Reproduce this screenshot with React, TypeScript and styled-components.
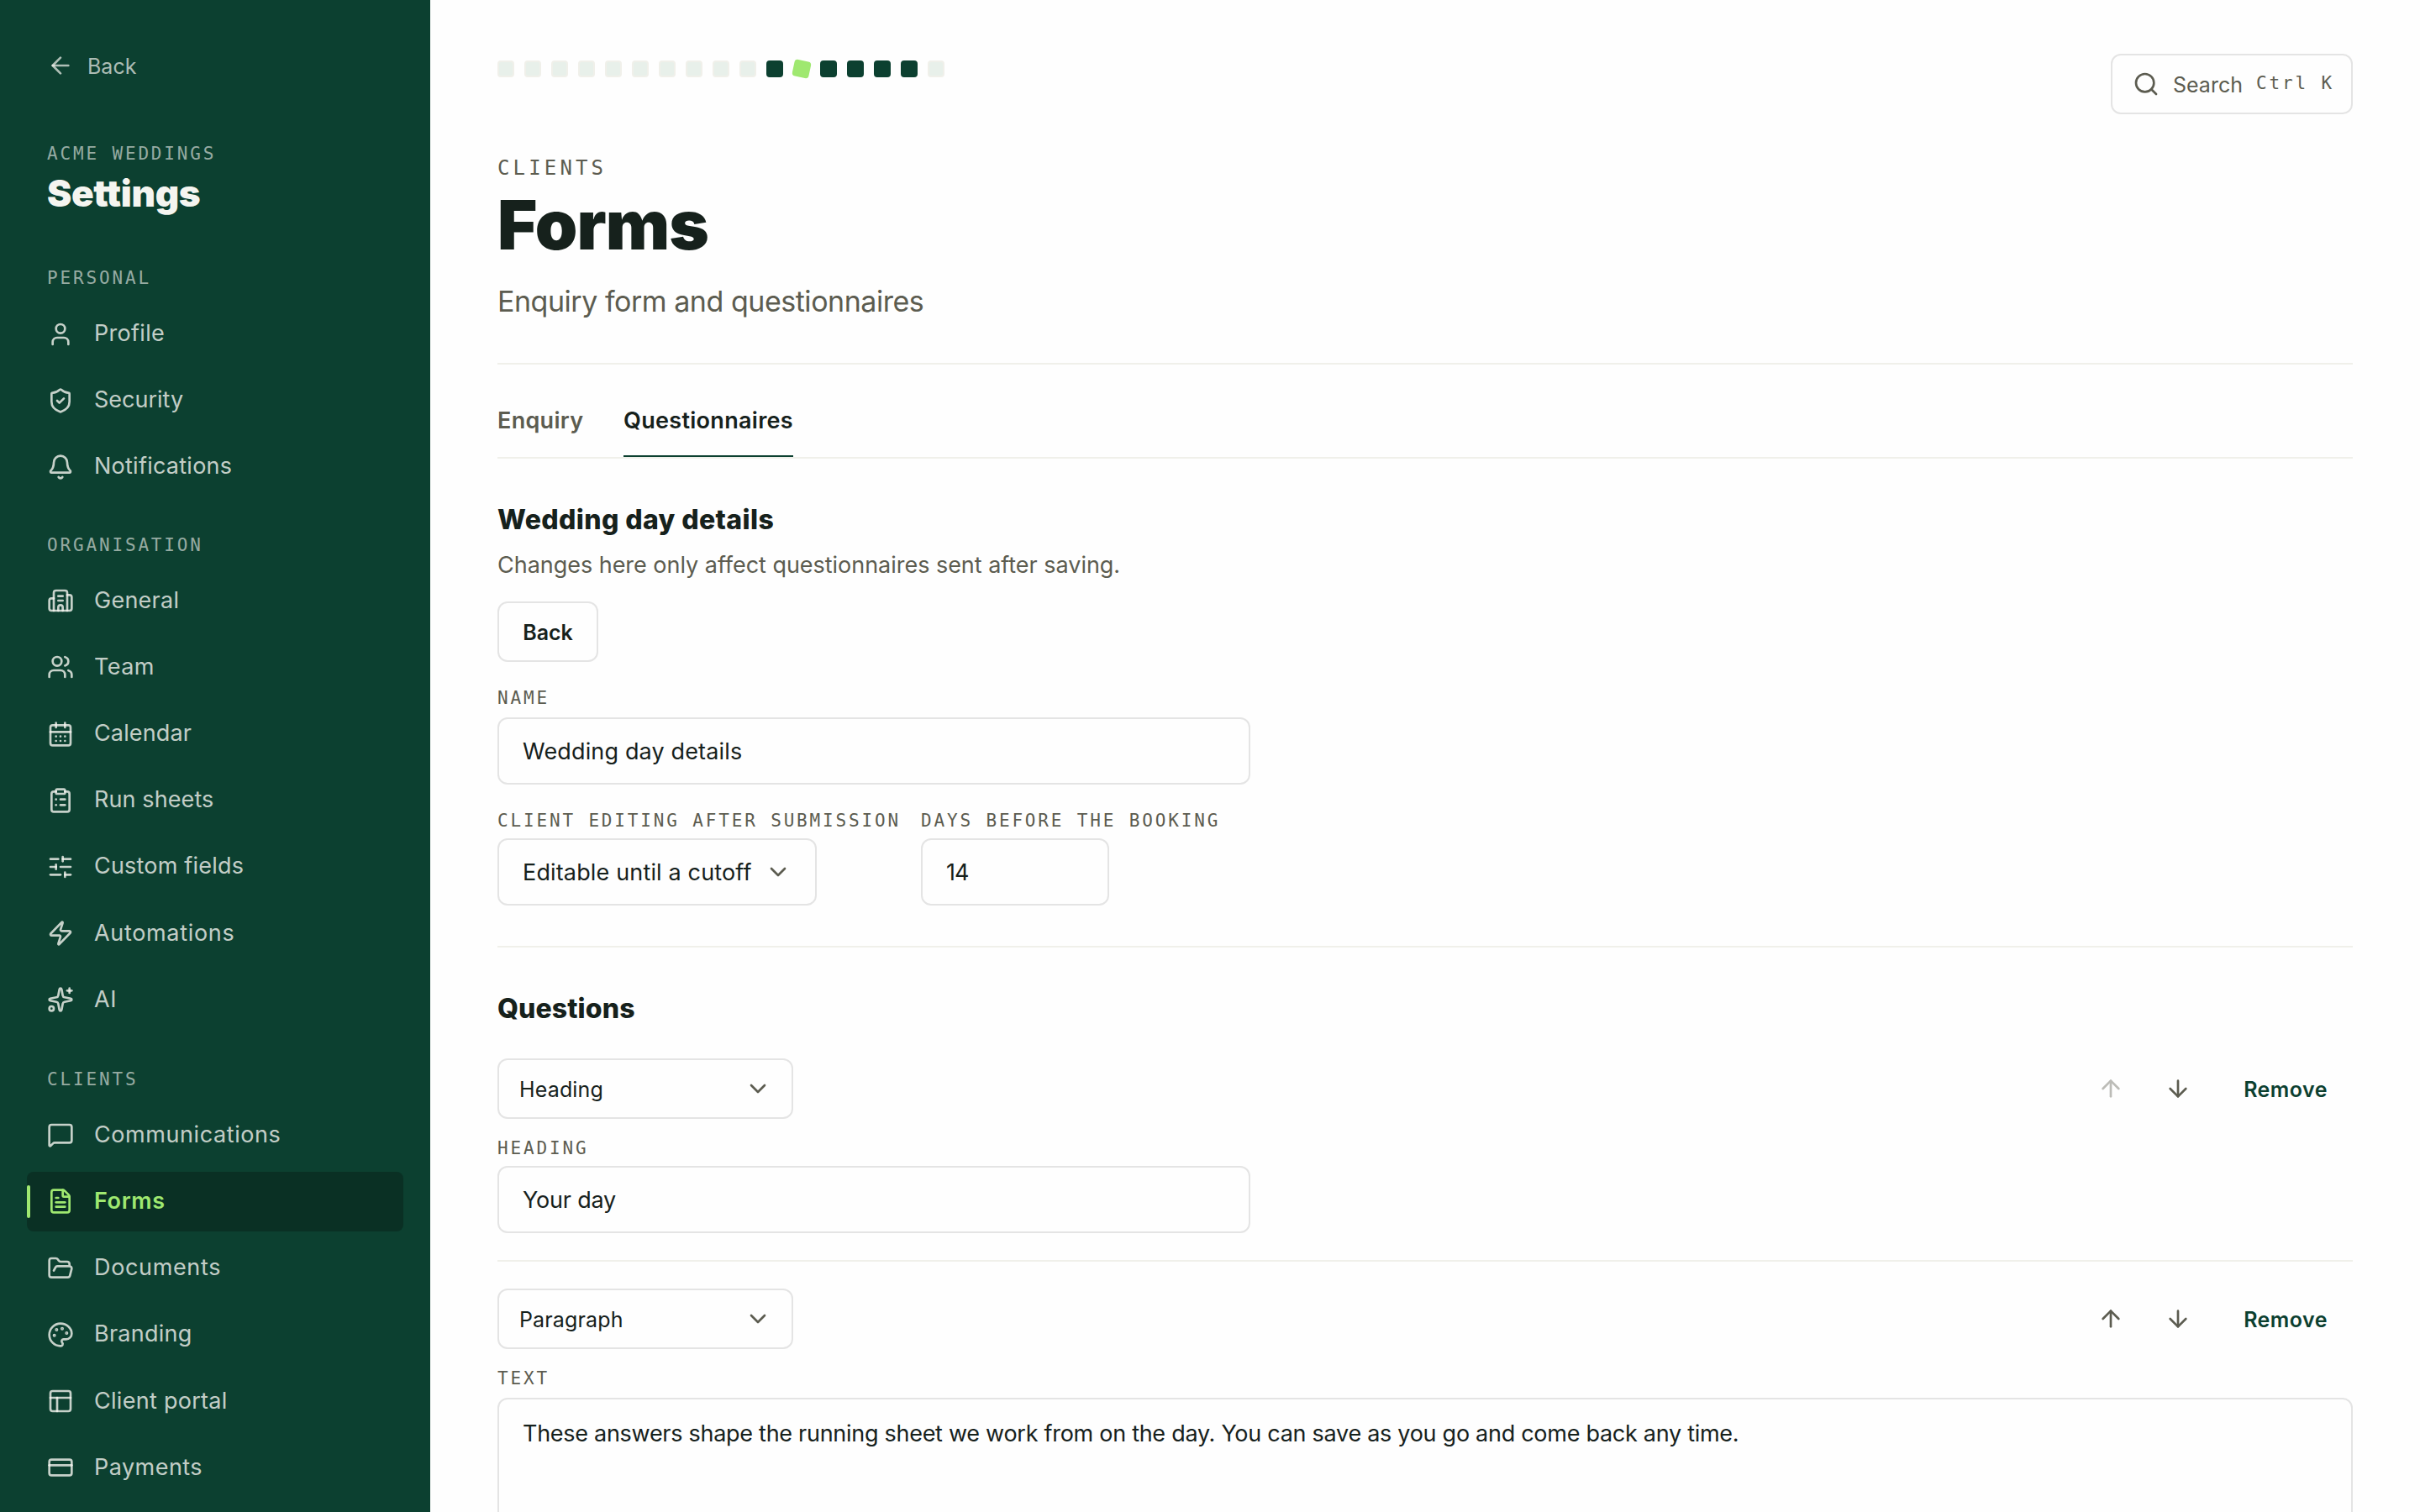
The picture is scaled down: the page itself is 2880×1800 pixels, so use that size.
import React from "react";
import styled, { createGlobalStyle, css } from "styled-components";
import {
  ArrowDown, ArrowLeft, ArrowUp, Bell, Building2, CalendarDays, ChevronDown, ClipboardList, CreditCard,
  FileText, FolderOpen, MessageSquare, Palette, PanelsTopLeft, Search, ShieldCheck, SlidersHorizontal,
  Sparkles, User, Users, Zap,
} from "lucide-react";

const c = {
  forest: "#0c4030",
  forestDeep: "#0a3024",
  lime: "#9fe870",
  ink: "#16211c",
  muted: "#5c5c50",
  line: "#f0f0ea",
  border: "#e4e4e4",
  mint: "#e8f0ea",
  cream: "#f5f5f0",
};
const sans = `Inter, "Open Sans", sans-serif`;
const mono = `"DejaVu Sans Mono", monospace`;

const Global = createGlobalStyle`
  * { box-sizing: border-box; }
  body { margin: 0; background: #fefefe; overflow: hidden; }
  h1, h2, p { margin: 0; }
`;

const Page = styled.div`
  display: flex;
  width: 2880px;
  height: 1800px;
  overflow: hidden;
  font-family: ${sans};
  color: ${c.ink};
`;

const Sidebar = styled.aside`
  width: 512px;
  flex: none;
  background: ${c.forest};
  padding: 58px 32px 0;
`;
const BackLink = styled.div`
  display: flex;
  align-items: center;
  gap: 16px;
  height: 40px;
  padding-left: 24px;
  font-size: 25px;
  color: rgba(245, 245, 240, 0.7);
  span { padding-top: 2px; }
`;
const MonoLabel = styled.div`
  font-family: ${mono};
  font-size: 21px;
  line-height: 30px;
  letter-spacing: 2.84px;
  white-space: pre;
`;
const SideLabel = styled(MonoLabel)`
  padding-left: 24px;
  color: rgba(245, 245, 240, 0.6);
`;
const OrgLabel = styled(SideLabel)`
  margin-top: 70px;
`;
const SideTitle = styled.div`
  padding-left: 24px;
  margin-top: 8px;
  font-size: 44px;
  line-height: 48px;
  font-weight: 900;
  letter-spacing: -0.35px;
  color: ${c.cream};
`;
const Section = styled.nav<{ $top: number }>`
  margin-top: ${(p) => p.$top}px;
  display: flex;
  flex-direction: column;
  gap: 8px;
`;
const SectionLabel = styled(SideLabel)`
  margin-bottom: 8px;
`;
const Item = styled.div<{ $active?: boolean }>`
  display: flex;
  align-items: center;
  gap: 24px;
  height: 71.2px;
  padding-left: 24px;
  border-radius: 8px;
  font-size: 27px;
  color: rgba(245, 245, 240, 0.8);
  ${(p) => p.$active && css`
    position: relative;
    background: ${c.forestDeep};
    color: ${c.lime};
    font-weight: 600;
    &::before {
      content: "";
      position: absolute;
      left: 0;
      top: 16px;
      bottom: 16px;
      width: 4px;
      border-radius: 2px;
      background: ${c.lime};
    }
  `}
`;
const ItemText = styled.span<{ $ls?: number }>`
  padding-bottom: 2px;
  letter-spacing: ${(p) => p.$ls ?? 0}px;
`;

const Main = styled.main`
  flex: 1;
  min-width: 0;
  padding: 64px 80px 0;
`;
const TopBar = styled.div`
  display: flex;
  justify-content: space-between;
  height: 72px;
`;
const Tiles = styled.div`
  display: flex;
  gap: 12px;
  padding-top: 8px;
`;
const Tile = styled.span<{ $kind: string }>`
  width: 20px;
  height: 20px;
  border-radius: 4px;
  border: 2px solid ${c.line};
  background: ${c.mint};
  ${(p) => p.$kind === "d" && css`background: ${c.forest}; border-color: ${c.forest};`}
  ${(p) => p.$kind === "l" && css`background: ${c.lime}; border-color: ${c.lime}; transform: rotate(12deg);`}
`;
const SearchBox = styled.div`
  display: flex;
  align-items: center;
  width: 288px;
  height: 72px;
  padding-left: 24px;
  border: 2px solid ${c.border};
  border-radius: 12px;
  color: ${c.muted};
`;
const SearchText = styled.span`
  margin-left: 16px;
  width: 99px;
  padding-top: 1px;
  font-size: 25px;
`;
const Shortcut = styled(MonoLabel)`
  padding-bottom: 3px;
`;
const Eyebrow = styled(MonoLabel)`
  margin-top: 48px;
  font-size: 24px;
  line-height: 32px;
  letter-spacing: 4.15px;
  color: ${c.muted};
`;
const Title = styled.h1`
  margin-top: 8px;
  font-size: 81px;
  line-height: 88px;
  font-weight: 900;
  letter-spacing: -0.9px;
`;
const Lede = styled.p`
  margin-top: 25px;
  height: 44px;
  font-size: 34px;
  line-height: 44px;
  letter-spacing: -0.47px;
  color: ${c.muted};
`;
const Rule = styled.div<{ $top: number }>`
  height: 2px;
  margin-top: ${(p) => p.$top}px;
  background: ${c.line};
`;
const Tabs = styled.div`
  display: flex;
  gap: 48px;
  height: 112px;
  border-bottom: 2px solid ${c.line};
`;
const Tab = styled.div<{ $active?: boolean; $w: number }>`
  width: ${(p) => p.$w}px;
  padding-top: 50px;
  font-size: 27px;
  line-height: 34px;
  font-weight: 600;
  white-space: nowrap;
  letter-spacing: 0.3px;
  color: ${(p) => (p.$active ? c.ink : c.muted)};
  border-bottom: 2px solid ${(p) => (p.$active ? c.forest : "transparent")};
`;
const Heading = styled.h2<{ $top: number; $ls: number }>`
  margin-top: ${(p) => p.$top}px;
  font-size: 32px;
  line-height: 40px;
  font-weight: 800;
  letter-spacing: ${(p) => p.$ls}px;
`;
const Note = styled.p`
  margin-top: 16px;
  font-size: 27px;
  line-height: 36px;
  letter-spacing: -0.03px;
  color: ${c.muted};
`;
const Button = styled.div<{ $ghost?: boolean; $w: number }>`
  display: flex;
  align-items: center;
  justify-content: center;
  width: ${(p) => p.$w}px;
  height: 72px;
  padding-top: 2px;
  border: 2px solid ${(p) => (p.$ghost ? "transparent" : c.border)};
  border-radius: 12px;
  font-size: 25px;
  font-weight: 600;
  letter-spacing: ${(p) => (p.$ghost ? 0.45 : 0)}px;
  color: ${(p) => (p.$ghost ? c.forest : c.ink)};
`;
const BackButton = styled(Button)`
  margin-top: 25px;
`;
const Label = styled(MonoLabel)<{ $top?: number }>`
  margin-top: ${(p) => p.$top ?? 0}px;
  height: 30px;
  color: ${c.muted};
`;
const Field = styled.div<{ $w?: number; $small?: boolean; $top?: number; $ls?: number }>`
  display: flex;
  align-items: center;
  justify-content: space-between;
  width: ${(p) => (p.$w ? p.$w + "px" : "100%")};
  height: ${(p) => (p.$small ? 72 : 80)}px;
  margin-top: ${(p) => p.$top ?? 0}px;
  padding: 0 ${(p) => (p.$small ? 24 : 28)}px;
  border: 2px solid ${c.border};
  border-radius: 12px;
  font-size: ${(p) => (p.$small ? 25 : 27)}px;
  letter-spacing: ${(p) => p.$ls ?? 0.15}px;
  white-space: nowrap;
  svg { color: ${c.muted}; }
  span { padding-top: ${(p) => (p.$small ? 1 : 0)}px; }
`;
const TextArea = styled(Field)`
  height: 200px;
  align-items: flex-start;
  padding-top: 23px;
  line-height: 36px;
`;
const FieldRow = styled.div`
  display: flex;
  gap: 24px;
  margin-top: 28px;
`;
const FieldCol = styled.div<{ $w: number }>`
  width: ${(p) => p.$w}px;
`;
const QuestionBar = styled.div<{ $top: number }>`
  display: flex;
  align-items: center;
  justify-content: space-between;
  margin-top: ${(p) => p.$top}px;
`;
const Actions = styled.div`
  display: flex;
  align-items: center;
  gap: 16px;
`;
const IconButton = styled.span<{ $disabled?: boolean }>`
  display: flex;
  align-items: center;
  justify-content: center;
  width: 64px;
  height: 64px;
  color: ${c.muted};
  opacity: ${(p) => (p.$disabled ? 0.4 : 1)};
`;

const icon = { size: 32, strokeWidth: 2 };

type Entry = [React.ElementType, string, number?];
const personal: Entry[] = [[User, "Profile", 0.3], [ShieldCheck, "Security"], [Bell, "Notifications", 0.25]];
const organisation: Entry[] = [
  [Building2, "General", 0.25], [Users, "Team", 0.45], [CalendarDays, "Calendar", 0.15],
  [ClipboardList, "Run sheets", 0.1], [SlidersHorizontal, "Custom fields", 0.2],
  [Zap, "Automations", 0.67], [Sparkles, "AI", 0.6],
];
const clients: Entry[] = [
  [MessageSquare, "Communications", 0.58], [FileText, "Forms", 0.6], [FolderOpen, "Documents", 0.65],
  [Palette, "Branding", 0.25], [PanelsTopLeft, "Client portal", 0.28], [CreditCard, "Payments", 0.46],
];

function NavSection({ label, items, top }: { label: string; items: Entry[]; top: number }) {
  return (
    <Section $top={top}>
      <SectionLabel>{label}</SectionLabel>
      {items.map(([Icon, text, ls]) => (
        <Item key={text} $active={text === "Forms"}>
          <Icon {...icon} />
          <ItemText $ls={ls}>{text}</ItemText>
        </Item>
      ))}
    </Section>
  );
}

function Question({ type, top, first }: { type: string; top: number; first?: boolean }) {
  return (
    <QuestionBar $top={top}>
      <Field $w={352} $small>
        <span>{type}</span>
        <ChevronDown {...icon} />
      </Field>
      <Actions>
        <IconButton $disabled={first}><ArrowUp {...icon} /></IconButton>
        <IconButton><ArrowDown {...icon} /></IconButton>
        <Button $ghost $w={160}>Remove</Button>
      </Actions>
    </QuestionBar>
  );
}

export default function App() {
  return (
    <Page>
      <Global />
      <Sidebar>
        <BackLink><ArrowLeft {...icon} /><span>Back</span></BackLink>
        <OrgLabel>ACME WEDDINGS</OrgLabel>
        <SideTitle>Settings</SideTitle>
        <NavSection label="PERSONAL" items={personal} top={62} />
        <NavSection label="ORGANISATION" items={organisation} top={42} />
        <NavSection label="CLIENTS" items={clients} top={43.8} />
      </Sidebar>
      <Main>
        <TopBar>
          <Tiles>
            {"wwwwwwwwwwdlddddw".split("").map((k, i) => <Tile key={i} $kind={k} />)}
          </Tiles>
          <SearchBox>
            <Search {...icon} />
            <SearchText>Search</SearchText>
            <Shortcut>Ctrl K</Shortcut>
          </SearchBox>
        </TopBar>
        <Eyebrow>CLIENTS</Eyebrow>
        <Title>Forms</Title>
        <Lede>Enquiry form and questionnaires</Lede>
        <Rule $top={51} />
        <Tabs>
          <Tab $w={102}>Enquiry</Tab>
          <Tab $w={202} $active>Questionnaires</Tab>
        </Tabs>
        <Heading $top={53} $ls={0.38}>Wedding day details</Heading>
        <Note>Changes here only affect questionnaires sent after saving.</Note>
        <BackButton $w={120}>Back</BackButton>
        <Label $top={28}>NAME</Label>
        <Field $w={896} $top={8}>Wedding day details</Field>
        <FieldRow>
          <FieldCol $w={480}>
            <Label>CLIENT EDITING AFTER SUBMISSION</Label>
            <Field $w={380} $top={6}>
              <span>Editable until a cutoff</span>
              <ChevronDown {...icon} />
            </Field>
          </FieldCol>
          <FieldCol $w={480}>
            <Label>DAYS BEFORE THE BOOKING</Label>
            <Field $w={224} $top={6} $ls={-0.9}>14</Field>
          </FieldCol>
        </FieldRow>
        <Rule $top={48} />
        <Heading $top={53} $ls={0.1}>Questions</Heading>
        <Question type="Heading" top={39} first />
        <Label $top={20}>HEADING</Label>
        <Field $w={896} $top={6} $ls={-0.2}>Your day</Field>
        <Rule $top={32} />
        <Question type="Paragraph" top={32} />
        <Label $top={20}>TEXT</Label>
        <TextArea $top={8} $ls={-0.28}>
          These answers shape the running sheet we work from on the day. You can save as you go and come back any time.
        </TextArea>
      </Main>
    </Page>
  );
}
